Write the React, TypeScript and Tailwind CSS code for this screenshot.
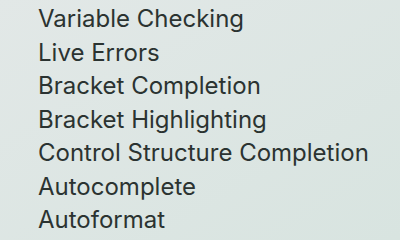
import React from "react";

const items = [
  "Variable Checking",
  "Live Errors",
  "Bracket Completion",
  "Bracket Highlighting",
  "Control Structure Completion",
  "Autocomplete",
  "Autoformat",
];

export default function App() {
  return (
    <div className="w-[400px] h-[240px] overflow-hidden bg-gradient-to-br from-[#e2e8e7] to-[#d8e4e0]">
      <ul className="flex flex-col pl-[38px] pt-[2px] text-[24px] leading-[33.5px] text-[#2b3331] font-['Inter','Liberation_Sans',sans-serif]">
        {items.map((t) => (
          <li key={t} className="whitespace-nowrap">{t}</li>
        ))}
      </ul>
    </div>
  );
}
